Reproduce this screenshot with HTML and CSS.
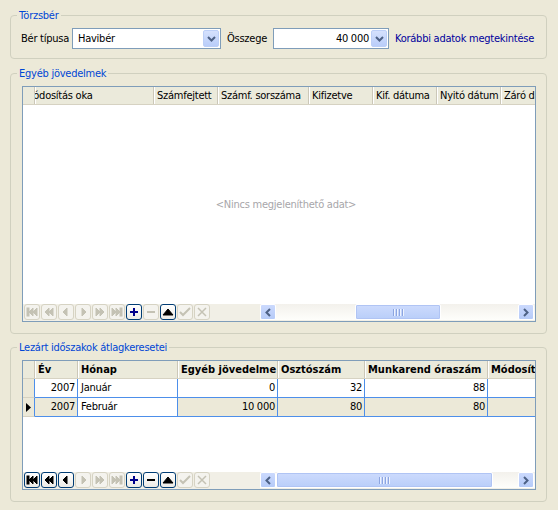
FILE: index.html
```html
<!DOCTYPE html>
<html lang="hu">
<head>
    <meta charset="UTF-8">
    <title>Törzsbér</title>
    <link rel="stylesheet" href="styles.css">
</head>
<body>

    <!-- TÖRZSBÉR -->
    <fieldset class="group">
        <legend>Törzsbér</legend>
        <div class="form-row">
            <span class="lbl lbl-type">Bér típusa</span>
            <div class="combo combo-type">
                <span class="combo-text">Havibér</span>
                <span class="combo-btn"><svg viewBox="0 0 9 6" width="9" height="6"><path d="M1 1 L4.5 4.5 L8 1" fill="none" stroke="#4d6185" stroke-width="2"/></svg></span>
            </div>
            <span class="lbl lbl-sum">Összege</span>
            <div class="combo combo-sum">
                <span class="combo-text num">40 000</span>
                <span class="combo-btn"><svg viewBox="0 0 9 6" width="9" height="6"><path d="M1 1 L4.5 4.5 L8 1" fill="none" stroke="#4d6185" stroke-width="2"/></svg></span>
            </div>
            <a class="link" href="#">Korábbi adatok megtekintése</a>
        </div>
    </fieldset>

    <!-- EGYÉB JÖVEDELMEK -->
    <fieldset class="group">
        <legend>Egyéb jövedelmek</legend>
        <div class="grid grid-income">
            <div class="grid-head">
                <div class="hc rh"></div>
                <div class="hc" style="width:119px"><span class="scrolled">Módosítás oka</span></div>
                <div class="hc" style="width:64px">Számfejtett</div>
                <div class="hc" style="width:91px">Számf. sorszáma</div>
                <div class="hc" style="width:64px">Kifizetve</div>
                <div class="hc" style="width:64px">Kif. dátuma</div>
                <div class="hc" style="width:64px">Nyitó dátum</div>
                <div class="hc last">Záró dátum</div>
            </div>
            <div class="grid-body empty">&lt;Nincs megjeleníthető adat&gt;</div>
            <div class="grid-foot">
                <div class="nav">
                    <span class="nb off"><svg viewBox="0 0 12 10"><rect x="1" y="1" width="2" height="8"/><path d="M7 1 L3 5 L7 9Z M11 1 L7 5 L11 9Z"/></svg></span>
                    <span class="nb off"><svg viewBox="0 0 12 10"><path d="M6 1 L2 5 L6 9Z M10 1 L6 5 L10 9Z"/></svg></span>
                    <span class="nb off"><svg viewBox="0 0 12 10"><path d="M7 1 L3 5 L7 9Z"/></svg></span>
                    <span class="nb off"><svg viewBox="0 0 12 10"><path d="M5 1 L9 5 L5 9Z"/></svg></span>
                    <span class="nb off"><svg viewBox="0 0 12 10"><path d="M2 1 L6 5 L2 9Z M6 1 L10 5 L6 9Z"/></svg></span>
                    <span class="nb off"><svg viewBox="0 0 12 10"><path d="M1 1 L5 5 L1 9Z M5 1 L9 5 L5 9Z"/><rect x="9" y="1" width="2" height="8"/></svg></span>
                    <span class="nb on add"><svg viewBox="0 0 12 10"><path d="M2 5 H10 M6 1 V9" stroke-width="2"/></svg></span>
                    <span class="nb off"><svg viewBox="0 0 12 10"><path d="M2 5 H10" stroke-width="2"/></svg></span>
                    <span class="nb on"><svg viewBox="0 0 12 10"><path d="M1 8 L6 2 L11 8Z"/></svg></span>
                    <span class="nb off"><svg viewBox="0 0 12 10"><path d="M1 5 L4 8 L11 1" fill="none" stroke-width="2"/></svg></span>
                    <span class="nb off"><svg viewBox="0 0 12 10"><path d="M2 1 L10 9 M10 1 L2 9" stroke-width="1.5"/></svg></span>
                </div>
                <div class="hscroll">
                    <span class="sb-btn"><svg viewBox="0 0 6 9" width="6" height="9"><path d="M5 1 L1.5 4.5 L5 8" fill="none" stroke="#4d6185" stroke-width="2"/></svg></span>
                    <div class="sb-track">
                        <span class="sb-thumb" style="margin-left:79px; width:86px"><i></i><i></i><i></i><i></i></span>
                    </div>
                    <span class="sb-btn"><svg viewBox="0 0 6 9" width="6" height="9"><path d="M1 1 L4.5 4.5 L1 8" fill="none" stroke="#4d6185" stroke-width="2"/></svg></span>
                </div>
            </div>
        </div>
    </fieldset>

    <!-- LEZÁRT IDŐSZAKOK -->
    <fieldset class="group">
        <legend>Lezárt időszakok átlagkeresetei</legend>
        <div class="grid grid-closed">
            <div class="grid-head bold">
                <div class="hc rh"></div>
                <div class="hc" style="width:43px">Év</div>
                <div class="hc" style="width:100px">Hónap</div>
                <div class="hc" style="width:100px">Egyéb jövedelme</div>
                <div class="hc" style="width:87px">Osztószám</div>
                <div class="hc" style="width:123px">Munkarend óraszám</div>
                <div class="hc last">Módosította</div>
            </div>
            <div class="grid-body">
                <div class="row">
                    <div class="rc rh"></div>
                    <div class="rc num" style="width:43px">2007</div>
                    <div class="rc" style="width:100px">Január</div>
                    <div class="rc num" style="width:100px">0</div>
                    <div class="rc num" style="width:87px">32</div>
                    <div class="rc num" style="width:123px">88</div>
                    <div class="rc last"></div>
                </div>
                <div class="row current">
                    <div class="rc rh"><svg viewBox="0 0 5 9" width="5" height="9"><path d="M0 0 L5 4.5 L0 9Z"/></svg></div>
                    <div class="rc num" style="width:43px">2007</div>
                    <div class="rc focus" style="width:100px">Február</div>
                    <div class="rc num" style="width:100px">10 000</div>
                    <div class="rc num" style="width:87px">80</div>
                    <div class="rc num" style="width:123px">80</div>
                    <div class="rc last"></div>
                </div>
            </div>
            <div class="grid-foot">
                <div class="nav">
                    <span class="nb on"><svg viewBox="0 0 12 10"><rect x="1" y="1" width="2" height="8"/><path d="M7 1 L3 5 L7 9Z M11 1 L7 5 L11 9Z"/></svg></span>
                    <span class="nb on"><svg viewBox="0 0 12 10"><path d="M6 1 L2 5 L6 9Z M10 1 L6 5 L10 9Z"/></svg></span>
                    <span class="nb on"><svg viewBox="0 0 12 10"><path d="M7 1 L3 5 L7 9Z"/></svg></span>
                    <span class="nb off"><svg viewBox="0 0 12 10"><path d="M5 1 L9 5 L5 9Z"/></svg></span>
                    <span class="nb off"><svg viewBox="0 0 12 10"><path d="M2 1 L6 5 L2 9Z M6 1 L10 5 L6 9Z"/></svg></span>
                    <span class="nb off"><svg viewBox="0 0 12 10"><path d="M1 1 L5 5 L1 9Z M5 1 L9 5 L5 9Z"/><rect x="9" y="1" width="2" height="8"/></svg></span>
                    <span class="nb on add"><svg viewBox="0 0 12 10"><path d="M2 5 H10 M6 1 V9" stroke-width="2"/></svg></span>
                    <span class="nb on"><svg viewBox="0 0 12 10"><path d="M2 5 H10" stroke-width="2"/></svg></span>
                    <span class="nb on"><svg viewBox="0 0 12 10"><path d="M1 8 L6 2 L11 8Z"/></svg></span>
                    <span class="nb off"><svg viewBox="0 0 12 10"><path d="M1 5 L4 8 L11 1" fill="none" stroke-width="2"/></svg></span>
                    <span class="nb off"><svg viewBox="0 0 12 10"><path d="M2 1 L10 9 M10 1 L2 9" stroke-width="1.5"/></svg></span>
                </div>
                <div class="hscroll">
                    <span class="sb-btn"><svg viewBox="0 0 6 9" width="6" height="9"><path d="M5 1 L1.5 4.5 L5 8" fill="none" stroke="#4d6185" stroke-width="2"/></svg></span>
                    <div class="sb-track">
                        <span class="sb-thumb" style="margin-left:0; width:217px"><i></i><i></i><i></i><i></i></span>
                    </div>
                    <span class="sb-btn"><svg viewBox="0 0 6 9" width="6" height="9"><path d="M1 1 L4.5 4.5 L1 8" fill="none" stroke="#4d6185" stroke-width="2"/></svg></span>
                </div>
            </div>
        </div>
    </fieldset>

</body>
</html>
```

FILE: styles.css
```css
/* --- GENERALE --- */
html, body {
    margin: 0;
    background: #ece9d8;
}

body {
    padding: 9px 11px 0 10px;
    font-family: "DejaVu Sans Condensed", "Liberation Sans", sans-serif;
    font-size: 11px;
    letter-spacing: -0.25px;
    color: #000;
}

/* --- GROUP BOX --- */
.group {
    min-width: 0;
    margin: 0 0 7px 0;
    padding: 6px 10px 11px 11px;
    border: 1px solid #d0d0bf;
    border-radius: 4px;
}

.group legend {
    padding: 0 2px;
    margin-left: -5px;
    line-height: 13px;
    color: #0046d5;
}

.group:first-child {
    margin-bottom: 8px;
    padding-bottom: 9px;
}

/* --- RIGA TORZSBER --- */
.form-row {
    display: flex;
    align-items: center;
    height: 21px;
}

.lbl,
.combo {
    flex-shrink: 0;
    white-space: nowrap;
}

.lbl-type {
    width: 51px;
    margin-left: -1px;
}

.lbl-sum {
    width: 46px;
    padding-left: 6px;
}

.combo {
    display: flex;
    align-items: center;
    height: 21px;
    box-sizing: border-box;
    border: 1px solid #7f9db9;
    background: #fff;
}

.combo-type { width: 149px; }
.combo-sum { width: 116px; }

.combo-text {
    flex: 1;
    padding-left: 5px;
    white-space: nowrap;
}

.combo-text.num {
    text-align: right;
    padding-right: 2px;
}

.combo-btn {
    width: 16px;
    height: 17px;
    margin: 0 1px 0 0;
    display: flex;
    align-items: center;
    justify-content: center;
    border: 1px solid #bccff7;
    border-radius: 2px;
    box-sizing: border-box;
    background: linear-gradient(#d5e1fd, #b9cdf9);
}

.link {
    margin-left: 6px;
    color: #00009c;
    text-decoration: none;
    white-space: nowrap;
}

/* --- GRIGLIA --- */
.grid {
    display: flex;
    flex-direction: column;
    box-sizing: border-box;
    border: 1px solid #7f9db9;
    background: #fff;
    overflow: hidden;
}

.grid-income { height: 236px; }
.grid-closed { height: 130px; }

.grid-head {
    display: flex;
    height: 18px;
    flex-shrink: 0;
    background: #ebeadb;
    border-bottom: 1px solid #d6d2c2;
    box-sizing: border-box;
}

.grid-head.bold {
    font-weight: bold;
    letter-spacing: 0;
}

.hc {
    flex-shrink: 0;
    box-sizing: border-box;
    line-height: 17px;
    padding-left: 3px;
    white-space: nowrap;
    overflow: hidden;
    border-left: 1px solid #cbc7b8;
    box-shadow: inset 1px 0 0 #fff;
}

.hc.rh {
    width: 11px;
    border-left: 0;
    box-shadow: none;
}

.hc.last {
    flex: 1;
    min-width: 0;
}

.scrolled {
    display: inline-block;
    margin-left: -13px;
}

.grid-body {
    flex: 1;
    background: #fff;
}

.grid-body.empty {
    display: flex;
    align-items: center;
    justify-content: center;
    padding-left: 14px;
    color: #a7a6aa;
}

/* righe */
.row {
    display: flex;
    height: 19px;
    box-sizing: border-box;
}

.rc {
    flex-shrink: 0;
    box-sizing: border-box;
    line-height: 18px;
    padding: 0 2px 0 3px;
    white-space: nowrap;
    overflow: hidden;
    border-right: 1px solid #4d8fea;
    border-bottom: 1px solid #4d8fea;
    background: #fff;
}

.rc.num { text-align: right; }

.rc.last {
    flex: 1;
    min-width: 0;
    border-right: 0;
}

.rc.rh {
    width: 12px;
    padding: 0;
    background: #ece9d8;
    border-right: 1px solid #4d8fea;
    border-bottom: 1px solid #d6d2c2;
    display: flex;
    align-items: center;
    justify-content: center;
}

.row.current .rc { background: #ece9d8; }
.row.current .rc.focus { background: #fff; }

/* --- BARRA INFERIORE --- */
.grid-foot {
    display: flex;
    height: 17px;
    flex-shrink: 0;
    background: #f1efe6;
}

.nav {
    display: flex;
    width: 237px;
    flex-shrink: 0;
    padding: 0 0 0 1px;
    box-sizing: border-box;
    gap: 1px;
}

.nb {
    width: 16px;
    height: 16px;
    display: flex;
    align-items: center;
    justify-content: center;
    box-sizing: border-box;
    border-radius: 3px;
}

.nb svg {
    width: 12px;
    height: 10px;
}

.nb.off {
    border: 1px solid #d6d3c3;
    background: #f4f3ee;
    fill: #c4c2b4;
    stroke: #c4c2b4;
}

.nb.on {
    border: 1px solid #003c74;
    background: linear-gradient(#fff, #ecebe6);
    fill: #000;
    stroke: #000;
}

.nb.on.add {
    fill: #00008b;
    stroke: #00008b;
}

/* scrollbar */
.hscroll {
    flex: 1;
    min-width: 0;
    display: flex;
    height: 16px;
    padding-right: 1px;
    background: linear-gradient(#f3f1ec, #fefefb);
}

.sb-btn {
    width: 16px;
    height: 16px;
    flex-shrink: 0;
    display: flex;
    align-items: center;
    justify-content: center;
    box-sizing: border-box;
    border: 1px solid #fff;
    border-radius: 2px;
    background: linear-gradient(#cbd9fd, #b6cbf8);
}

.sb-track {
    flex: 1;
    display: flex;
}

.sb-thumb {
    height: 16px;
    box-sizing: border-box;
    display: flex;
    align-items: center;
    justify-content: center;
    gap: 1px;
    border: 1px solid #fff;
    border-radius: 2px;
    background: linear-gradient(#cddbfd, #b9cef9);
    box-shadow: inset 0 0 0 1px #b0c4f4;
}

.sb-thumb i {
    width: 1px;
    height: 7px;
    background: #8ca5e0;
    border-right: 1px solid #eef3fe;
}
```
